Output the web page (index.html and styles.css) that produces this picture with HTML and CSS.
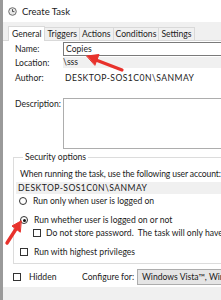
FILE: index.html
```html
<!DOCTYPE html>
<html>
<head>
<meta charset="utf-8">
<link rel="stylesheet" href="styles.css">
</head>
<body>
<div class="window">
  <div class="titlebar">
    <svg class="app-icon" width="9" height="9" viewBox="0 0 9 9"><circle cx="4.5" cy="4.5" r="3.8" fill="#e8e8e8" stroke="#6d6d6d" stroke-width="1"/><path d="M4.5 2.2V4.6H6.4" fill="none" stroke="#3a3a3a" stroke-width="0.9"/></svg>
    <span class="title">Create Task</span>
  </div>
  <div class="tabs">
    <div class="tab active">General</div>
    <div class="tab">Triggers</div>
    <div class="tab">Actions</div>
    <div class="tab">Conditions</div>
    <div class="tab">Settings</div>
  </div>
  <div class="panel">
    <div class="row name-row">
      <span class="label">Name:</span>
      <div class="textbox">Copies</div>
    </div>
    <div class="row loc-row">
      <span class="label">Location:</span>
      <div class="readonly">\sss</div>
    </div>
    <div class="row author-row">
      <span class="label">Author:</span>
      <div class="value caps">DESKTOP-SOS1C0N\SANMAY</div>
    </div>
    <div class="row desc-row">
      <span class="label">Description:</span>
      <div class="textarea"></div>
    </div>
    <fieldset class="group">
      <legend>Security options</legend>
      <div class="account-text">When running the task, use the following user account:</div>
      <div class="account caps">DESKTOP-SOS1C0N\SANMAY</div>
      <div class="opt radio-row"><span class="radio"></span>Run only when user is logged on</div>
      <div class="opt radio-row sel"><span class="radio checked"></span>Run whether user is logged on or not</div>
      <div class="opt check-row indent"><span class="check"></span>Do not store password.&nbsp; The task will only have access to local resources</div>
      <div class="opt check-row priv"><span class="check"></span>Run with highest privileges</div>
    </fieldset>
    <div class="bottom-row">
      <div class="opt hidden-opt"><span class="check"></span>Hidden</div>
      <span class="cfg-label">Configure for:</span>
      <div class="select">Windows Vista™, Windows Server™ 2008</div>
    </div>
  </div>
  <div class="footer"></div>
</div>
<svg class="arrows" width="221" height="300" viewBox="0 0 221 300">
  <g fill="#e8322c" stroke="#e8322c" stroke-linecap="round" stroke-linejoin="round">
    <line x1="122" y1="70" x2="96" y2="60" stroke-width="3.2"/>
    <polygon points="87,56 99,54.5 95,65" stroke-width="1"/>
    <line x1="7" y1="243" x2="16" y2="229" stroke-width="3.4"/>
    <polygon points="21,221 12,226 20,232" stroke-width="1"/>
  </g>
</svg>
</body>
</html>
```
FILE: styles.css
```css
* { box-sizing: border-box; }
html, body { margin: 0; padding: 0; }
body {
  width: 221px;
  height: 300px;
  overflow: hidden;
  position: relative;
  background: #f0f0f0;
  font-family: "Lato", "Open Sans", sans-serif;
  font-size: 8.6px;
  color: #1b1b1b;
}
.caps { letter-spacing: 0.45px; }
.window {
  height: 300px;
  border-left: 3px solid #9a9a9a;
  display: flex;
  flex-direction: column;
}
.titlebar {
  height: 22px;
  flex: none;
  background: #fff;
  display: flex;
  align-items: center;
  padding-left: 5px;
  gap: 5px;
}
.app-icon { margin-top: 1px; }
.title { font-size: 9.5px; color: #222; }
.tabs {
  display: flex;
  align-items: flex-end;
  padding-left: 5px;
  height: 18px;
  flex: none;
  background: #f0f0f0;
}
.tab {
  height: 13px;
  padding: 0 2px;
  line-height: 12px;
  border: 1px solid #d9d9d9;
  border-bottom: none;
  border-left: none;
  background: #f0f0f0;
  color: #222;
  font-size: 8.6px;
}
.tab.active {
  height: 15px;
  line-height: 14px;
  background: #fff;
  border-left: 1px solid #d9d9d9;
  padding: 0 3px;
  margin-bottom: -1px;
  position: relative;
}
.panel {
  flex: 1;
  background: #fff;
  border-top: 1px solid #d9d9d9;
  padding: 1px 0 0 12px;
  display: flex;
  flex-direction: column;
}
.row {
  display: flex;
  align-items: center;
  flex: none;
}
.label {
  width: 48px;
  flex: none;
}
.name-row { height: 14px; }
.textbox {
  flex: 1;
  height: 14px;
  border: 1px solid #7a7a7a;
  border-right: none;
  padding-left: 2px;
  line-height: 12px;
}
.loc-row { height: 11px; margin-top: 1px; }
.readonly {
  flex: 1;
  height: 11px;
  background: #f0f0f0;
  line-height: 11px;
  padding-left: 0;
}
.author-row { height: 14px; margin-top: 3px; }
.value { padding-left: 2px; white-space: nowrap; }
.desc-row {
  align-items: flex-start;
  margin-top: 13px;
  height: 51px;
}
.desc-row .label { margin-top: 1px; line-height: 10px; }
.textarea {
  flex: 1;
  height: 51px;
  border: 1px solid #adadad;
  border-right: none;
}
.group {
  margin: 2px 0 0 -2px;
  padding: 0 0 5px 6px;
  border: 1px solid #dcdcdc;
  border-right: none;
  min-width: 0;
  flex: none;
}
.group legend {
  padding: 0 2px;
  margin-left: 3px;
  line-height: 12px;
  color: #222;
}
.account-text {
  margin-top: 5px;
  height: 12px;
  line-height: 12px;
  white-space: nowrap;
  letter-spacing: -0.12px;
}
.account {
  margin-top: 2px;
  height: 12px;
  line-height: 12px;
  background: #f0f0f0;
  padding-left: 2px;
  margin-left: -4px;
  white-space: nowrap;
}
.opt {
  display: flex;
  align-items: center;
  gap: 6px;
  white-space: nowrap;
  height: 12px;
}
.radio-row { margin-top: 1px; margin-left: -1px; }
.radio-row.sel { margin-top: 7px; margin-left: 0; }
.radio {
  width: 8px; height: 8px; border-radius: 50%;
  border: 1px solid #333;
  background: #fff;
  flex: none;
  position: relative;
}
.radio.checked::after {
  content: "";
  position: absolute;
  left: 1.5px; top: 1.5px;
  width: 3px; height: 3px; border-radius: 50%;
  background: #111;
}
.check {
  width: 8px; height: 8px;
  border: 1px solid #333;
  background: #fff;
  flex: none;
}
.indent { margin-left: 13px; margin-top: 1px; gap: 5px; }
.priv { margin-top: 7px; margin-left: 0; }
.bottom-row {
  display: flex;
  align-items: center;
  margin-top: 5px;
  height: 16px;
  margin-left: -2px;
  flex: none;
}
.hidden-opt { width: 69px; flex: none; gap: 8px; }
.cfg-label { width: 55px; flex: none; white-space: nowrap; }
.select {
  flex: 1;
  height: 16px;
  background: #e5e5e5;
  border: 1px solid #adadad;
  border-right: none;
  padding-left: 4px;
  line-height: 14px;
  white-space: nowrap;
  overflow: hidden;
}
.footer { height: 13px; background: #f0f0f0; flex: none; }
.arrows { position: absolute; left: 0; top: 0; pointer-events: none; }
```
